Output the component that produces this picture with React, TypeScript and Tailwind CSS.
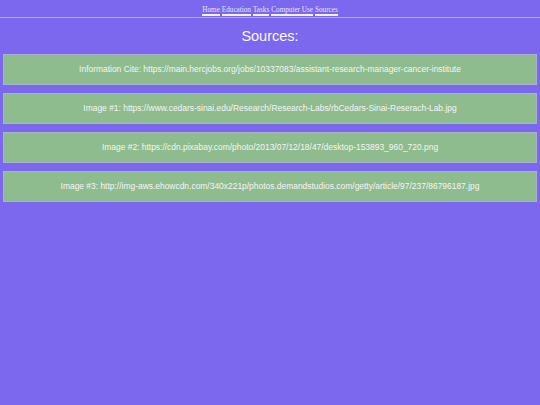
const links = ["Home", "Education", "Tasks", "Computer Use", "Sources"];

const sources = [
  "Information Cite: https://main.hercjobs.org/jobs/10337083/assistant-research-manager-cancer-institute",
  "Image #1: https://www.cedars-sinai.edu/Research/Research-Labs/rbCedars-Sinai-Reserach-Lab.jpg",
  "Image #2: https://cdn.pixabay.com/photo/2013/07/12/18/47/desktop-153893_960_720.png",
  "Image #3: http://img-aws.ehowcdn.com/340x221p/photos.demandstudios.com/getty/article/97/237/86796187.jpg",
];

export default function App() {
  return (
    <div className="min-h-[405px] w-full bg-[#7b68ee] font-['Liberation_Sans',Arial,sans-serif]">
      {/* Nav */}
      <nav className="flex justify-center gap-[2px] border-b border-[#b3a9f3] pt-[6px] pb-[1px] font-['Liberation_Serif',serif] text-[7.2px] leading-[8px]">
        {links.map((l) => (
          <a key={l} href="#" className="border-b-2 border-[#f4f2ff] text-[#e8e6ff]">
            {l}
          </a>
        ))}
      </nav>

      <h1 className="pt-[9px] pb-[9px] text-center text-[14.5px] leading-[18px] text-[#f8f8ff]">Sources:</h1>

      <div className="flex flex-col gap-[8px] px-[3px]">
        {sources.map((s) => (
          <div
            key={s}
            className="flex h-[31px] items-center justify-center border border-[#a7b3c8] bg-[#8fbc8f] text-[8.45px] text-[#f4f4f4]"
          >
            {s}
          </div>
        ))}
      </div>
    </div>
  );
}
